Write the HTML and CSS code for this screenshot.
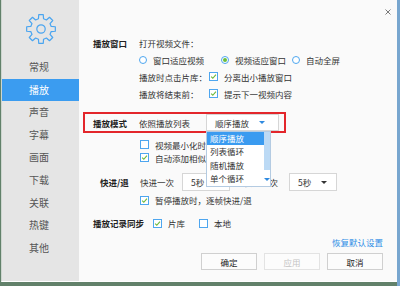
FILE: index.html
```html
<!DOCTYPE html>
<html lang="zh-CN">
<head>
  <meta charset="UTF-8" />
  <title>设置</title>
  <link rel="stylesheet" href="styles.css">
</head>
<body>
  <div class="window">
    <aside class="sidebar">
      <svg class="gear" viewBox="0 0 32 32">
        <polygon points="26.19,13.46 30.32,13.73 30.32,18.27 26.19,18.54 25,21.41 27.73,24.52 24.52,27.73 21.41,25 18.54,26.19 18.27,30.32 13.73,30.32 13.46,26.19 10.59,25 7.48,27.73 4.27,24.52 7,21.41 5.81,18.54 1.68,18.27 1.68,13.73 5.81,13.46 7,10.59 4.27,7.48 7.48,4.27 10.59,7 13.46,5.81 13.73,1.68 18.27,1.68 18.54,5.81 21.41,7 24.52,4.27 27.73,7.48 25,10.59" />
        <circle cx="16" cy="16" r="4.2" />
      </svg>
      <ul class="nav">
        <li>常规</li>
        <li class="active">播放</li>
        <li>声音</li>
        <li>字幕</li>
        <li>画面</li>
        <li>下载</li>
        <li>关联</li>
        <li>热键</li>
        <li>其他</li>
      </ul>
    </aside>

    <main class="panel">
      <svg class="close" viewBox="0 0 6 6"><path d="M0.5 0.5 L5.5 5.5 M5.5 0.5 L0.5 5.5" /></svg>

      <div class="row">
        <span class="label">播放窗口</span>
        <span>打开视频文件：</span>
      </div>
      <div class="row indent">
        <label class="opt w1"><i class="radio"></i>窗口适应视频</label>
        <label class="opt w2"><i class="radio on"></i>视频适应窗口</label>
        <label class="opt"><i class="radio"></i>自动全屏</label>
      </div>
      <div class="row indent">
        <span class="hint">播放时点击片库：</span>
        <label class="opt"><i class="check"><svg viewBox="0 0 8 8"><path d="M1.3 4.2 L3.2 6 L6.8 1.8" /></svg></i>分离出小播放窗口</label>
      </div>
      <div class="row indent">
        <span class="hint">播放将结束前：</span>
        <label class="opt"><i class="check"><svg viewBox="0 0 8 8"><path d="M1.3 4.2 L3.2 6 L6.8 1.8" /></svg></i>提示下一视频内容</label>
      </div>

      <div class="row mode">
        <span class="label">播放模式</span>
        <span class="mode-text">依照播放列表</span>
        <div class="select wide">
          顺序播放<b class="arrow blue"></b>
          <div class="dropdown">
            <ul class="items">
              <li class="selected">顺序播放</li>
              <li>列表循环</li>
              <li>随机播放</li>
              <li>单个循环</li>
            </ul>
            <div class="scroll">
              <div class="thumb"></div>
              <b class="arrow blue"></b>
            </div>
          </div>
        </div>
      </div>

      <div class="row chk first">
        <label class="opt"><i class="check"></i>视频最小化时暂停播放</label>
      </div>
      <div class="row chk">
        <label class="opt"><i class="check"><svg viewBox="0 0 8 8"><path d="M1.3 4.2 L3.2 6 L6.8 1.8" /></svg></i>自动添加相似文件到播放列表</label>
      </div>

      <div class="row seek">
        <span class="label seek-label">快进/退</span>
        <span class="seek-text">快进一次</span>
        <div class="select short">5秒<b class="arrow"></b></div>
        <span class="seek-text back">快退一次</span>
        <div class="select short">5秒<b class="arrow"></b></div>
      </div>
      <div class="row chk tall">
        <label class="opt"><i class="check"><svg viewBox="0 0 8 8"><path d="M1.3 4.2 L3.2 6 L6.8 1.8" /></svg></i>暂停播放时，逐帧快进/退</label>
      </div>

      <div class="row sync">
        <span class="label auto">播放记录同步</span>
        <label class="opt w3"><i class="check"><svg viewBox="0 0 8 8"><path d="M1.3 4.2 L3.2 6 L6.8 1.8" /></svg></i>片库</label>
        <label class="opt"><i class="check"></i>本地</label>
      </div>

      <div class="row link-row">
        <a class="reset">恢复默认设置</a>
      </div>

      <div class="buttons">
        <button>确定</button>
        <button class="disabled">应用</button>
        <button>取消</button>
      </div>
    </main>
  </div>
</body>
</html>
```

FILE: styles.css
```css
* { box-sizing: border-box; }
body {
  margin: 0; width: 400px; height: 286px; overflow: hidden;
  background: linear-gradient(to right, #62816a 0, #62816a 397px, #78a6cf 397px);
  font-family: "Noto Sans CJK SC", sans-serif;
  font-size: 8.5px; color: #333;
}
.window {
  display: flex; margin-left: 1px;
  width: 396px; height: 282px;
  border-left: 1px solid #cdd6cf; border-bottom: 1px solid #fff;
  background: #fafafa;
}

/* sidebar */
.sidebar {
  width: 77px; background: #e5e5e5;
  display: flex; flex-direction: column; align-items: center;
}
.gear { width: 32px; height: 32px; margin-top: 13px; }
.gear polygon, .gear circle {
  fill: none; stroke: #4aa5f0; stroke-width: 1.2; stroke-linejoin: round;
}
.nav { list-style: none; margin: 11px 0 0; padding: 0; width: 100%; }
.nav li {
  height: 22.6px; line-height: 22.6px; text-align: center;
  font-size: 10px; color: #555; padding-right: 3px;
}
.nav li.active { background: #3b9cf0; color: #fff; }

/* main panel */
.panel { flex: 1; position: relative; padding: 34px 14px 0 14px; }
.close {
  position: absolute; top: 9px; right: 6px; width: 6px; height: 6px;
}
.close path { stroke: #7a7a7a; stroke-width: 1; fill: none; }

.row { display: flex; align-items: center; height: 17px; white-space: nowrap; }
.label { width: 46px; flex: none; font-weight: bold; color: #222; }
.label.auto { width: auto; }
.indent { padding-left: 46px; }
.hint { width: 70px; }

.opt { display: flex; align-items: center; gap: 6px; }
.w1 { width: 82px; }
.w2 { width: 71px; }
.w3 { width: 46px; }

.radio {
  width: 8px; height: 8px; flex: none;
  border: 1px solid #4ea6ef; border-radius: 50%; background: #fff;
  display: flex; align-items: center; justify-content: center;
}
.radio.on::after {
  content: ""; width: 4px; height: 4px; border-radius: 50%; background: #6cbd39;
}
.check {
  width: 9px; height: 9px; flex: none;
  border: 1px solid #4ea6ef; background: #fff;
  display: flex; align-items: center; justify-content: center;
}
.check svg { width: 7px; height: 7px; }
.check path { fill: none; stroke: #6cb93a; stroke-width: 1.3; }

/* play mode box */
.mode {
  margin: 10px 0 0 -10px; width: 203px; height: 21px;
  border: 2px solid #e3262b; padding-left: 8px;
}
.mode-text { width: 67px; }

.select {
  position: relative; display: flex; align-items: center;
  height: 17px; border: 1px solid #d6d6d6; background: #fff; padding: 0 9px 0 8px;
}
.select.wide { width: 73px; padding-right: 13px; }
.select.short { width: 48px; height: 18px; }
.arrow {
  margin-left: auto; width: 0; height: 0;
  border-left: 3px solid transparent; border-right: 3px solid transparent;
  border-top: 3px solid #333;
}
.arrow.blue { border-top-color: #2f8ae0; }

.dropdown {
  position: absolute; left: -1px; top: calc(100% + 1px); z-index: 2;
  display: flex; width: 65px; height: 56px;
  border: 1px solid #b4cbe2; background: #fff;
}
.items { list-style: none; margin: 0; padding: 0; flex: 1; }
.items li { height: 13.3px; line-height: 13.3px; padding-left: 3px; color: #333; }
.items li.selected { background: #3a9bf0; color: #fff; }
.scroll { width: 6px; display: flex; flex-direction: column; align-items: center; }
.thumb { width: 6px; height: 38px; background: #bcdaf5; }
.scroll .arrow { margin: 8px 0 0; }

.chk { height: 13px; padding-left: 47px; }
.chk .opt { gap: 6px; }
.chk.first { margin-top: 5px; }
.chk.tall { height: 18px; }

.seek { margin-top: 9px; height: 18px; }
.seek-label { padding-left: 7px; }
.seek-text { width: 42px; margin-left: 1px; }
.seek-text.back { width: 45px; margin-left: 14px; }

.sync { margin-top: 5px; height: 18px; }
.sync .w3 { margin-left: 9px; }

.link-row { justify-content: flex-end; margin-top: 3px; height: 14px; }
.reset { color: #2e8ee6; }

.buttons { display: flex; justify-content: flex-end; gap: 7px; margin-top: 4px; }
.buttons button {
  width: 56px; height: 17px; padding: 0;
  border: 1px solid #d0d0d0; background: #fcfcfc;
  font-family: inherit; font-size: 8.5px; color: #222;
}
.buttons button.disabled { color: #c4c4c4; border-color: #e3e3e3; }
```
